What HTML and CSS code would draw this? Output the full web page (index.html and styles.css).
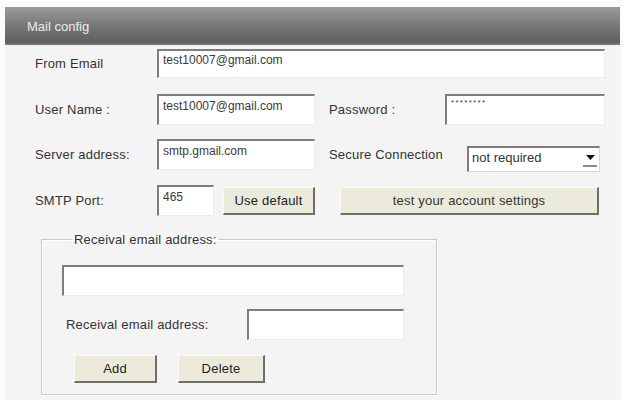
FILE: index.html
```html
<!DOCTYPE html>
<html>
<head>
<meta charset="utf-8">
<link rel="stylesheet" href="styles.css">
</head>
<body>
<div class="window">
  <div class="titlebar">Mail config</div>
  <div class="panel">
    <div class="row">
      <span class="lbl lbl-main">From Email</span>
      <input class="field w-from" type="text" value="test10007@gmail.com">
    </div>
    <div class="row">
      <span class="lbl lbl-main">User Name :</span>
      <input class="field w-mid" type="text" value="test10007@gmail.com">
      <span class="lbl lbl-pass">Password :</span>
      <input class="field field-pass w-pass" type="text" value="********">
    </div>
    <div class="row">
      <span class="lbl lbl-main">Server address:</span>
      <input class="field w-mid" type="text" value="smtp.gmail.com">
      <span class="lbl lbl-secure">Secure Connection</span>
      <div class="combo">
        <span class="combo-text">not required</span>
        <span class="combo-btn"><svg width="9" height="5" viewBox="0 0 9 5"><path d="M0 0h9L4.5 5z" fill="#111"/></svg></span>
      </div>
    </div>
    <div class="row">
      <span class="lbl lbl-main">SMTP Port:</span>
      <input class="field w-port" type="text" value="465">
      <button class="btn btn-default">Use default</button>
      <button class="btn btn-test">test your account settings</button>
    </div>
    <fieldset class="group">
      <legend class="group-title">Receival email address:</legend>
      <input class="field w-list" type="text" value="">
      <div class="group-row">
        <span class="lbl lbl-recv">Receival email address:</span>
        <input class="field w-recv" type="text" value="">
      </div>
      <div class="group-actions">
        <button class="btn btn-add">Add</button>
        <button class="btn btn-del">Delete</button>
      </div>
    </fieldset>
  </div>
</div>
</body>
</html>
```

FILE: styles.css
```css
html, body {
  margin: 0;
  padding: 0;
  background: #fbfbfb;
  font-family: "Liberation Sans", Arial, sans-serif;
  font-size: 13px;
  color: #333;
}

.window {
  margin: 7px 0 0 5px;
  width: 615px;
}

.titlebar {
  height: 38px;
  box-sizing: border-box;
  padding-left: 22px;
  display: flex;
  align-items: center;
  color: #ececec;
  font-size: 13px;
  background: linear-gradient(#9b9b9b, #7a7a7a 45%, #5f5f5f 92%, #7c7c7c);
}

.panel {
  background: #f4f4f4;
  min-height: 360px;
  padding: 3px 0 0 30px;
  box-sizing: border-box;
  display: flex;
  flex-direction: column;
  gap: 14.5px;
}

.row {
  display: flex;
  align-items: center;
  height: 31px;
}

.lbl {
  white-space: nowrap;
  letter-spacing: 0.2px;
}
.lbl-main { width: 122px; }
.lbl-pass { width: 116px; margin-left: 14px; }
.lbl-secure { width: 138px; margin-left: 14px; }

.field {
  box-sizing: border-box;
  height: 31px;
  margin: 0;
  padding: 1px 2px 9px 4px;
  border-style: solid;
  border-width: 2px 1px 1px 2px;
  border-color: #7d7d7d #ececec #ececec #7d7d7d;
  background: #ffffff;
  font-family: "Liberation Sans", Arial, sans-serif;
  font-size: 12px;
  color: #3a3a3a;
  outline: none;
}
.field-pass {
  font-size: 8px;
  padding-bottom: 16px;
  letter-spacing: 1.3px;
}
.w-from { width: 448px; height: 29px; }
.w-mid { width: 158px; }
.w-pass { width: 160px; }
.w-port { width: 57px; }
.w-list { width: 342px; }
.w-recv { width: 157px; }

.combo {
  box-sizing: border-box;
  width: 133px;
  height: 26px;
  margin-top: 8px;
  display: flex;
  align-items: flex-start;
  justify-content: space-between;
  border-style: solid;
  border-width: 2px 1px 1px 2px;
  border-color: #7d7d7d #d8d8d8 #d8d8d8 #7d7d7d;
  background: #ffffff;
}
.combo-text {
  padding: 2px 0 0 3px;
  font-size: 13px;
  color: #333;
}
.combo-btn {
  width: 14px;
  height: 16px;
  margin: 3px 2px 0 0;
  display: flex;
  align-items: center;
  justify-content: center;
  border-bottom: 2px solid #8a8a8a;
  box-sizing: border-box;
}

.btn {
  box-sizing: border-box;
  height: 28px;
  margin: 0;
  padding: 0;
  border-style: solid;
  border-width: 1px 2px 2px 1px;
  border-color: #fafafa #6e6e6e #6e6e6e #fafafa;
  background: #ecebdb;
  font-family: "Liberation Sans", Arial, sans-serif;
  font-size: 13px;
  color: #222;
  letter-spacing: 0.2px;
}
.btn-default { width: 92px; margin-left: 9px; align-self: flex-end; margin-bottom: 1px; }
.btn-test { width: 259px; margin-left: 25px; align-self: flex-end; margin-bottom: 1px; color: #333; }
.btn-add { width: 83px; }
.btn-del { width: 87px; }

.group {
  box-sizing: border-box;
  width: 396px;
  margin: 2px 0 0 6px;
  padding: 0 0 11px 20px;
  border: 1px solid #c9c9c9;
  box-shadow: inset 1px 1px 0 #ffffff, 1px 1px 0 #ffffff;
  display: flex;
  flex-direction: column;
}
.group-title {
  padding: 0 2px;
  margin-left: 10px;
  letter-spacing: 0.2px;
  color: #333;
}
.group .w-list {
  margin-top: 18px;
}
.group-row {
  display: flex;
  align-items: center;
  margin-top: 13px;
}
.lbl-recv { width: 185px; padding-left: 4px; box-sizing: border-box; }
.group-actions {
  display: flex;
  gap: 21px;
  margin: 15px 0 0 12px;
}
```
